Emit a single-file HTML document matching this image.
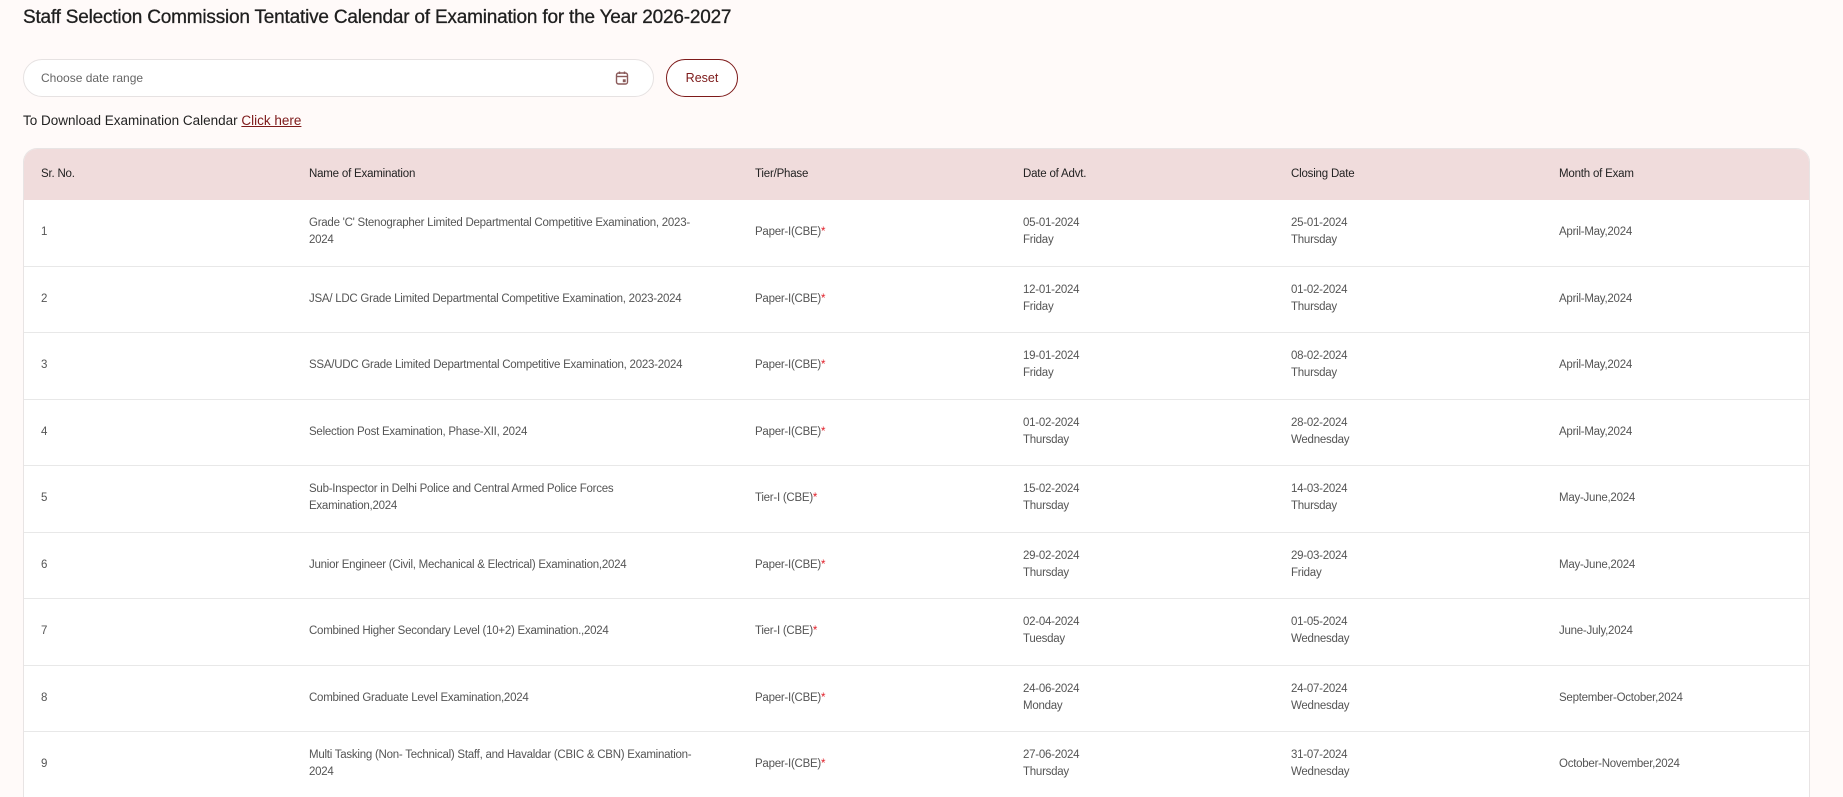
<!DOCTYPE html>
<html style="height:797px;overflow:hidden"><head><meta charset="utf-8"><style>
*{margin:0;padding:0;box-sizing:border-box}
body{width:1843px;height:797px;overflow:hidden;background:#fffaf9;font-family:"Liberation Sans",sans-serif;position:relative}
h1{position:absolute;left:23px;top:7px;font-size:19px;font-weight:normal;color:#1f1f1f;letter-spacing:-0.2px;-webkit-text-stroke:0.3px #1f1f1f}
.inp{position:absolute;left:23px;top:59px;width:631px;height:38px;border:1px solid #e6e2e2;border-radius:19px;background:#fff}
.inp span{position:absolute;left:17px;top:11px;font-size:12px;color:#666}
.inp svg{position:absolute;left:590px;top:10px}
.reset{position:absolute;left:666px;top:59px;width:72px;height:38px;border:1.5px solid #7d1a1a;border-radius:19px;color:#7d1a1a;font-size:12.5px;text-align:center;line-height:36px;background:#fff}
.dl{position:absolute;left:23px;top:113px;font-size:13.5px;color:#222}
.dl a{color:#7d1a1a;text-decoration:underline}
.tbl{position:absolute;left:23px;top:148px;width:1787px;height:649px;background:#fff;border:1px solid #e8e4e4;border-bottom:none;border-radius:14px 14px 0 0;overflow:hidden}
.hd{height:51px;background:#f0dcdc;position:relative}
.row{height:66.5px;border-bottom:1.5px solid #e8e8e8;position:relative}
.c{position:absolute;font-size:11.5px;color:#555;line-height:17px;letter-spacing:-0.25px}
.hd .c{color:#222;top:17px;letter-spacing:-0.2px}
.c1{left:17px}.c2{left:285px}.c3{left:731px}.c4{left:999px}.c5{left:1267px}.c6{left:1535px}
.s{color:#e0202a}
</style></head><body>
<h1>Staff Selection Commission Tentative Calendar of Examination for the Year 2026-2027</h1>
<div class="inp"><span>Choose date range</span>
<svg width="16" height="16" viewBox="0 0 16 16" fill="none" stroke="#8a5a5a" stroke-width="1.4"><rect x="2.5" y="3" width="11" height="11" rx="2"/><line x1="2.5" y1="6.5" x2="13.5" y2="6.5"/><line x1="5.5" y1="1.5" x2="5.5" y2="4"/><line x1="10.5" y1="1.5" x2="10.5" y2="4"/><rect x="9.5" y="10" width="1.5" height="1.5" fill="#8a5a5a"/></svg></div>
<div class="reset">Reset</div>
<div class="dl">To Download Examination Calendar <a>Click here</a></div>
<div class="tbl">
<div class="hd"><div class="c c1">Sr. No.</div><div class="c c2">Name of Examination</div><div class="c c3">Tier/Phase</div><div class="c c4">Date of Advt.</div><div class="c c5">Closing Date</div><div class="c c6">Month of Exam</div></div>

<div class="row"><div class="c c1" style="top:24px">1</div><div class="c c2" style="top:15px">Grade 'C' Stenographer Limited Departmental Competitive Examination, 2023-<br>2024</div><div class="c c3" style="top:24px">Paper-I(CBE)<span class="s">*</span></div><div class="c c4" style="top:15px">05-01-2024<br>Friday</div><div class="c c5" style="top:15px">25-01-2024<br>Thursday</div><div class="c c6" style="top:24px">April-May,2024</div></div>

<div class="row"><div class="c c1" style="top:24px">2</div><div class="c c2" style="top:24px">JSA/ LDC Grade Limited Departmental Competitive Examination, 2023-2024</div><div class="c c3" style="top:24px">Paper-I(CBE)<span class="s">*</span></div><div class="c c4" style="top:15px">12-01-2024<br>Friday</div><div class="c c5" style="top:15px">01-02-2024<br>Thursday</div><div class="c c6" style="top:24px">April-May,2024</div></div>

<div class="row"><div class="c c1" style="top:24px">3</div><div class="c c2" style="top:24px">SSA/UDC Grade Limited Departmental Competitive Examination, 2023-2024</div><div class="c c3" style="top:24px">Paper-I(CBE)<span class="s">*</span></div><div class="c c4" style="top:15px">19-01-2024<br>Friday</div><div class="c c5" style="top:15px">08-02-2024<br>Thursday</div><div class="c c6" style="top:24px">April-May,2024</div></div>

<div class="row"><div class="c c1" style="top:24px">4</div><div class="c c2" style="top:24px">Selection Post Examination, Phase-XII, 2024</div><div class="c c3" style="top:24px">Paper-I(CBE)<span class="s">*</span></div><div class="c c4" style="top:15px">01-02-2024<br>Thursday</div><div class="c c5" style="top:15px">28-02-2024<br>Wednesday</div><div class="c c6" style="top:24px">April-May,2024</div></div>

<div class="row"><div class="c c1" style="top:24px">5</div><div class="c c2" style="top:15px">Sub-Inspector in Delhi Police and Central Armed Police Forces<br>Examination,2024</div><div class="c c3" style="top:24px">Tier-I (CBE)<span class="s">*</span></div><div class="c c4" style="top:15px">15-02-2024<br>Thursday</div><div class="c c5" style="top:15px">14-03-2024<br>Thursday</div><div class="c c6" style="top:24px">May-June,2024</div></div>

<div class="row"><div class="c c1" style="top:24px">6</div><div class="c c2" style="top:24px">Junior Engineer (Civil, Mechanical &amp; Electrical) Examination,2024</div><div class="c c3" style="top:24px">Paper-I(CBE)<span class="s">*</span></div><div class="c c4" style="top:15px">29-02-2024<br>Thursday</div><div class="c c5" style="top:15px">29-03-2024<br>Friday</div><div class="c c6" style="top:24px">May-June,2024</div></div>

<div class="row"><div class="c c1" style="top:24px">7</div><div class="c c2" style="top:24px">Combined Higher Secondary Level (10+2) Examination.,2024</div><div class="c c3" style="top:24px">Tier-I (CBE)<span class="s">*</span></div><div class="c c4" style="top:15px">02-04-2024<br>Tuesday</div><div class="c c5" style="top:15px">01-05-2024<br>Wednesday</div><div class="c c6" style="top:24px">June-July,2024</div></div>

<div class="row"><div class="c c1" style="top:24px">8</div><div class="c c2" style="top:24px">Combined Graduate Level Examination,2024</div><div class="c c3" style="top:24px">Paper-I(CBE)<span class="s">*</span></div><div class="c c4" style="top:15px">24-06-2024<br>Monday</div><div class="c c5" style="top:15px">24-07-2024<br>Wednesday</div><div class="c c6" style="top:24px">September-October,2024</div></div>

<div class="row" style="border-bottom:none"><div class="c c1" style="top:24px">9</div><div class="c c2" style="top:15px">Multi Tasking (Non- Technical) Staff, and Havaldar (CBIC &amp; CBN) Examination-<br>2024</div><div class="c c3" style="top:24px">Paper-I(CBE)<span class="s">*</span></div><div class="c c4" style="top:15px">27-06-2024<br>Thursday</div><div class="c c5" style="top:15px">31-07-2024<br>Wednesday</div><div class="c c6" style="top:24px">October-November,2024</div></div>
</div>
</body></html>
